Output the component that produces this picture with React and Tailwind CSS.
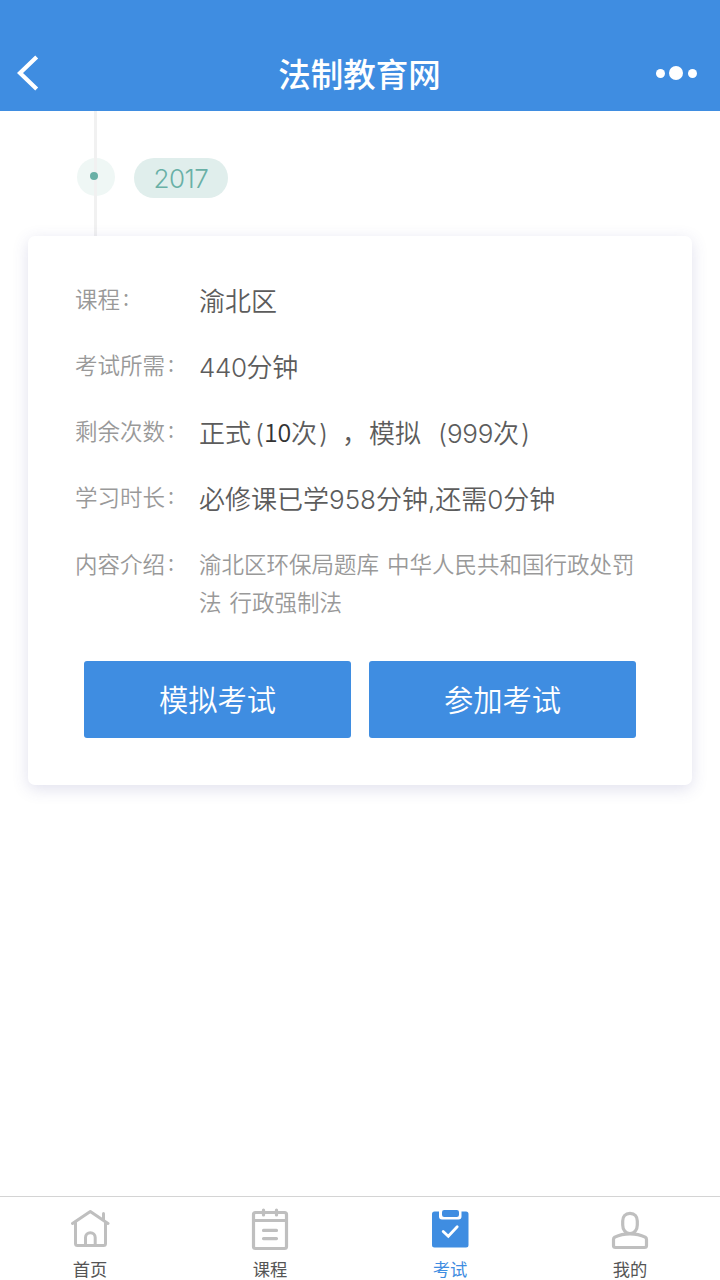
const fonts =
  "font-[family-name:Inter,'Noto_Sans_CJK_SC','Noto_Sans',sans-serif]";

const cjk = "font-[family-name:'Noto_Sans_CJK_SC',sans-serif]";

function HomeIcon() {
  return (
    <svg width="40" height="40" viewBox="0 0 40 40" fill="none" stroke="#bfbfbf" strokeWidth="3" strokeLinecap="round" strokeLinejoin="round">
      <path d="M2.5 15.5L20.3 3.5L38 15.5" />
      <path d="M5.5 14.5V35.5Q5.5 37.5 7.5 37.5H33.5Q35.5 37.5 35.5 35.5V14.5" />
      <path d="M33.5 5.5V11.5" />
      <path d="M15.5 37V29.5A4.8 4.8 0 0 1 25.2 29.5V37" />
    </svg>
  );
}

function CourseIcon() {
  return (
    <svg width="40" height="44" viewBox="0 0 40 44" fill="none" stroke="#bfbfbf" strokeWidth="3.2" strokeLinecap="round" strokeLinejoin="round">
      <rect x="3.5" y="4.5" width="33" height="36" rx="2" />
      <path d="M3.5 12.5H36.5M13.5 2V7M26.5 2V7M13.5 22.4H26.5M13.5 30.6H26.5" />
    </svg>
  );
}

function ExamIcon() {
  return (
    <svg width="40" height="40" viewBox="0 0 40 40">
      <path d="M4.5 3.5H9V8.5Q9 11.5 12 11.5H28.5Q31.5 11.5 31.5 8.5V3.5H36Q38.5 3.5 38.5 6V37Q38.5 39.5 36 39.5H4.5Q2 39.5 2 37V6Q2 3.5 4.5 3.5Z" fill="#3f8de1" />
      <rect x="12" y="2" width="17" height="7" rx="2.2" fill="#3f8de1" />
      <path d="M13.2 23.5L18.3 28.2L27.2 18.7" fill="none" stroke="#fff" strokeWidth="2.8" strokeLinecap="round" strokeLinejoin="miter" />
    </svg>
  );
}

function UserIcon() {
  return (
    <svg width="40" height="42" viewBox="0 0 40 42" fill="none" stroke="#bfbfbf" strokeWidth="3.2" strokeLinejoin="round">
      <path d="M20 5.3C24.8 5.3 27.3 8.5 27.3 13V17C27.3 21.5 24.5 25.5 20 25.5S12.7 21.5 12.7 17V13C12.7 8.5 15.2 5.3 20 5.3Z" />
      <path d="M20 25.9Q11.5 25.9 4.8 29.1Q3.5 30 3.5 31.5V37.5Q3.5 39.5 5.5 39.5H34.5Q36.5 39.5 36.5 37.5V31.5Q36.5 30 35.2 29.1Q28.5 25.9 20 25.9Z" />
    </svg>
  );
}

const tabs = [
  { name: "首页", icon: <HomeIcon /> },
  { name: "课程", icon: <CourseIcon /> },
  { name: "考试", icon: <ExamIcon />, active: true },
  { name: "我的", icon: <UserIcon /> },
];

const rows = [
  { label: "课程", value: "渝北区" },
  { label: "考试所需", value: <span className="tracking-[-0.4px]">440分钟</span> },
  {
    label: "剩余次数",
    value: (
      <div className="flex">
        <span className="w-[56px]">正式</span>
        <span className="w-[9px]">(</span>
        <span className={`-mt-[3px] w-[27px] text-[25px] font-[350] tracking-[-0.3px] text-[#333] ${cjk}`}>10</span>
        <span className="w-[28px]">次</span>
        <span className="w-[23px]">)</span>
        <span className="w-[27px]">，</span>
        <span className="w-[69px]">模拟</span>
        <span className="w-[9px]">(</span>
        <span className="w-[74px] tracking-[-0.3px]">999次</span>
        <span>)</span>
      </div>
    ),
  },
  { label: "学习时长", value: "必修课已学958分钟,还需0分钟" },
];

function Label({ children }) {
  return (
    <div className={`-ml-px w-[124px] shrink-0 text-[22.5px] font-[350] text-[#999] ${cjk}`}>
      {children}
      <span className="relative -top-[2px] ml-[3px]">:</span>
    </div>
  );
}

export default function App() {
  return (
    <div className={`flex h-[1280px] w-[720px] flex-col overflow-hidden bg-white ${fonts}`}>
      <header className="flex h-[111px] shrink-0 items-start justify-between bg-[#3f8de1] pt-[53px] pr-[23px] pl-[17px] text-white">
        <button className="flex h-10 w-[46px] items-center">
          <svg width="22" height="36" viewBox="0 0 22 36" fill="none" stroke="#fff" strokeWidth="4.2">
            <path d="M19.7 2L3 18L19.7 34" />
          </svg>
        </button>
        <h1 className={`text-[32.5px] leading-10 font-medium ${cjk}`}>法制教育网</h1>
        <button className="flex h-10 w-[41px] items-center justify-between">
          <span className="size-[9px] rounded-full bg-white" />
          <span className="size-[14px] rounded-full bg-white" />
          <span className="size-[9px] rounded-full bg-white" />
        </button>
      </header>

      <main className="flex-1">
        {/* timeline */}
        <div className="relative flex h-[125px] items-start pt-[47px] pl-[77px]">
          <div className="flex size-[38px] rounded-full bg-[#eff7f5]" />
          <span className="absolute top-0 left-[94px] h-[125px] w-[3px] bg-[#f1f1f1]" />
          <span className="absolute top-[61px] left-[90px] size-[8px] rounded-full bg-[#69b0a6]" />
          <div className="ml-[19px] flex h-10 w-[94px] items-center justify-center rounded-full bg-[#e0eeec] text-[26px] font-light tracking-[-0.5px] text-[#69b0a6]">
            2017
          </div>
        </div>

        <section className="relative mx-7 h-[549px] rounded-[7px] bg-white pt-8 pr-[52px] pl-12 shadow-[0_4px_16px_rgba(70,70,150,0.17)]">
          {rows.map((row) => (
            <div key={row.label} className="flex h-[66px] items-start leading-[60px]">
              <Label>{row.label}</Label>
              <div className="pt-[4px] text-[26px] font-[350] whitespace-nowrap text-[#5c5c5c]">
                {row.value}
              </div>
            </div>
          ))}
          <div className="flex pt-[12px] leading-[38px]">
            <Label>内容介绍</Label>
            <p className={`text-[22.5px] font-[350] whitespace-nowrap [word-spacing:3px] text-[#999] ${cjk}`}>
              渝北区环保局题库 中华人民共和国行政处罚
              <br />
              法 行政强制法
            </p>
          </div>
          <div className="mt-[41px] ml-2 flex gap-[18px] text-[29.3px] font-[350] text-white">
            <button className="h-[77px] w-[267px] rounded-[3px] bg-[#3f8de1] pt-[2px]">模拟考试</button>
            <button className="h-[77px] w-[267px] rounded-[3px] bg-[#3f8de1] pt-[2px]">参加考试</button>
          </div>
        </section>
      </main>

      <nav className="grid h-[84px] shrink-0 grid-cols-4 border-t border-[#d4d4d4]">
        {tabs.map((tab) => (
          <div key={tab.name} className="flex flex-col items-center pt-[11px]">
            <div className="flex h-[43px] items-start">{tab.icon}</div>
            <span className={`mt-[7px] text-[17.3px] leading-6 ${tab.active ? "text-[#3f8de1]" : "text-[#555]"}`}>
              {tab.name}
            </span>
          </div>
        ))}
      </nav>
    </div>
  );
}
